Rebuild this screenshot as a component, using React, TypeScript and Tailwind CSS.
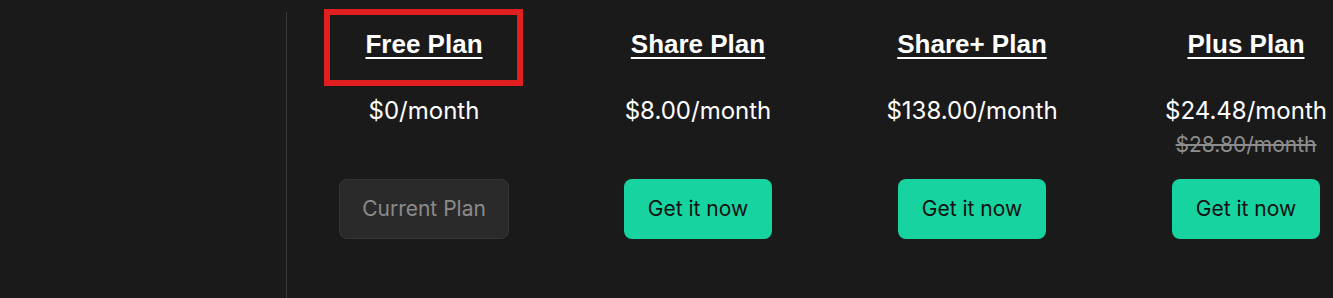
type Plan = {
  name: string;
  price: string;
  oldPrice?: string;
  current?: boolean;
  highlighted?: boolean;
};

const plans: Plan[] = [
  { name: "Free Plan", price: "$0/month", current: true, highlighted: true },
  { name: "Share Plan", price: "$8.00/month" },
  { name: "Share+ Plan", price: "$138.00/month" },
  { name: "Plus Plan", price: "$24.48/month", oldPrice: "$28.80/month" },
];

export default function App() {
  return (
    <div className="h-[298px] w-[1333px] overflow-hidden bg-[#1a1a1a] font-['Inter',sans-serif] text-white">
      <div className="flex h-full">
        {/* empty sidebar area */}
        <div className="w-[286px] shrink-0" />

        <div className="mt-3 flex shrink-0 border-l border-[#3a3a3a]">
          {plans.map((plan) => (
            <div
              key={plan.name}
              className="relative -mt-3 flex w-[274px] shrink-0 flex-col items-center"
            >
              {/* red highlight box */}
              {plan.highlighted && (
                <div className="absolute left-[37px] top-[9px] h-[77px] w-[199px] border-[6px] border-[#e02020]" />
              )}

              <h2 className="mt-[28px] font-['Liberation_Sans',Arial,sans-serif] text-[26px] leading-[32px] font-bold underline decoration-2 underline-offset-[4px]">
                {plan.name}
              </h2>

              <div className="mt-[35px] flex h-[84px] flex-col items-center">
                <p className="text-[24px] leading-[32px]">{plan.price}</p>
                {plan.oldPrice && (
                  <p className="mt-[6px] text-[21px] leading-[24px] text-[#8c8c8c] line-through">
                    {plan.oldPrice}
                  </p>
                )}
              </div>

              {plan.current ? (
                <button className="h-[60px] w-[170px] rounded-lg border border-[#353535] bg-[#2a2a2a] text-[21px] text-[#8a8a8a]">
                  Current Plan
                </button>
              ) : (
                <button className="h-[60px] w-[148px] rounded-lg bg-[#17d3a0] text-[21px] text-[#111]">
                  Get it now
                </button>
              )}
            </div>
          ))}
        </div>
      </div>
    </div>
  );
}
